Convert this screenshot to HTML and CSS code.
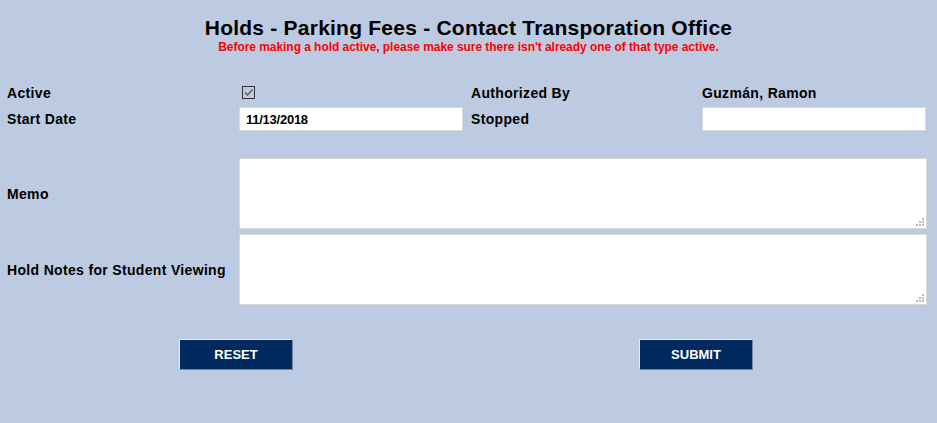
FILE: index.html
```html
<!DOCTYPE html>
<html>
<head>
<meta charset="utf-8">
<link rel="stylesheet" href="styles.css">
</head>
<body>
<div class="page">
  <header class="head">
    <h1 class="title">Holds - Parking Fees - Contact Transporation Office</h1>
    <p class="warn">Before making a hold active, please make sure there isn't already one of that type active.</p>
  </header>
  <form class="form">
    <div class="grid top">
      <label class="lbl">Active</label>
      <div class="cell"><span class="check"><svg width="11" height="11" viewBox="0 0 11 11"><path d="M2 5.5 L4.5 8 L9.5 2.5" fill="none" stroke="#555" stroke-width="1.3"/></svg></span></div>
      <label class="lbl">Authorized By</label>
      <div class="cell lbl">Guzmán, Ramon</div>
      <label class="lbl">Start Date</label>
      <div class="cell"><input class="txt" type="text" value="11/13/2018"></div>
      <label class="lbl">Stopped</label>
      <div class="cell"><input class="txt" type="text" value=""></div>
    </div>
    <div class="grid area">
      <label class="lbl">Memo</label>
      <div class="tawrap"><textarea class="ta"></textarea><span class="grip"></span></div>
      <label class="lbl">Hold Notes for Student Viewing</label>
      <div class="tawrap"><textarea class="ta"></textarea><span class="grip"></span></div>
    </div>
    <div class="buttons">
      <div class="bcell"><button type="button" class="btn">RESET</button></div>
      <div class="bcell"><button type="button" class="btn">SUBMIT</button></div>
    </div>
  </form>
</div>
</body>
</html>
```
FILE: styles.css
```css
html, body {
  margin: 0;
  padding: 0;
  background: #bccbe2;
  font-family: "Liberation Sans", Arial, sans-serif;
  color: #000;
}
.page {
  width: 937px;
  height: 423px;
  box-sizing: border-box;
  padding: 16px 10px 0 7px;
}
.head {
  text-align: center;
  margin-left: -7px;
  margin-right: -10px;
}
.title {
  margin: 0;
  font-size: 21px;
  line-height: 24px;
  letter-spacing: 0.23px;
  font-weight: bold;
}
.warn {
  margin: 0;
  color: #ff0000;
  font-size: 12px;
  line-height: 14px;
  letter-spacing: -0.05px;
  font-weight: bold;
}
.grid {
  display: grid;
  grid-template-columns: 232px 232px 231px 1fr;
  align-items: center;
}
.top {
  margin-top: 29px;
  grid-template-rows: 20px 24px;
  row-gap: 4px;
}
.lbl {
  font-size: 14px;
  letter-spacing: 0.33px;
  font-weight: bold;
}
.check {
  display: inline-flex;
  align-items: center;
  justify-content: center;
  width: 11px;
  height: 11px;
  border: 1px solid #333;
  background: #bccbe2;
  margin-left: 3px;
  margin-top: 1px;
}
.txt {
  display: block;
  box-sizing: border-box;
  width: 224px;
  height: 24px;
  margin: 0;
  border: 1px solid #d8d8d8;
  background: #fff;
  padding: 0 6px;
  font-family: "Liberation Sans", Arial, sans-serif;
  font-size: 13px;
  letter-spacing: -0.25px;
  font-weight: bold;
  color: #000;
  outline: none;
}
.area {
  margin-top: 27px;
  grid-template-columns: 232px 1fr;
  grid-template-rows: 71px 71px;
  row-gap: 5px;
}
.tawrap {
  position: relative;
  width: 688px;
  height: 71px;
}
.ta {
  display: block;
  box-sizing: border-box;
  width: 688px;
  height: 71px;
  margin: 0;
  border: 1px solid #d8d8d8;
  background: #fff;
  resize: none;
  outline: none;
}
.grip {
  position: absolute;
  right: 3px;
  bottom: 3px;
  width: 8px;
  height: 8px;
  background:
    linear-gradient(#bbb, #bbb) 6px 0 / 2px 2px no-repeat,
    linear-gradient(#bbb, #bbb) 3px 3px / 2px 2px no-repeat,
    linear-gradient(#bbb, #bbb) 6px 3px / 2px 2px no-repeat,
    linear-gradient(#bbb, #bbb) 0 6px / 2px 2px no-repeat,
    linear-gradient(#bbb, #bbb) 3px 6px / 2px 2px no-repeat,
    linear-gradient(#bbb, #bbb) 6px 6px / 2px 2px no-repeat;
}
.buttons {
  display: grid;
  grid-template-columns: 1fr 1fr;
  margin-top: 34px;
  margin-left: -1px;
  margin-right: 1px;
}
.bcell {
  display: flex;
  justify-content: center;
}
.btn {
  width: 114px;
  height: 31px;
  box-sizing: border-box;
  background: #002a5f;
  color: #fff;
  border: 1px solid;
  border-color: #e8eef6 #7a8799 #7a8799 #e8eef6;
  font-family: "Liberation Sans", Arial, sans-serif;
  font-size: 13px;
  font-weight: bold;
  padding: 0;
}
```
